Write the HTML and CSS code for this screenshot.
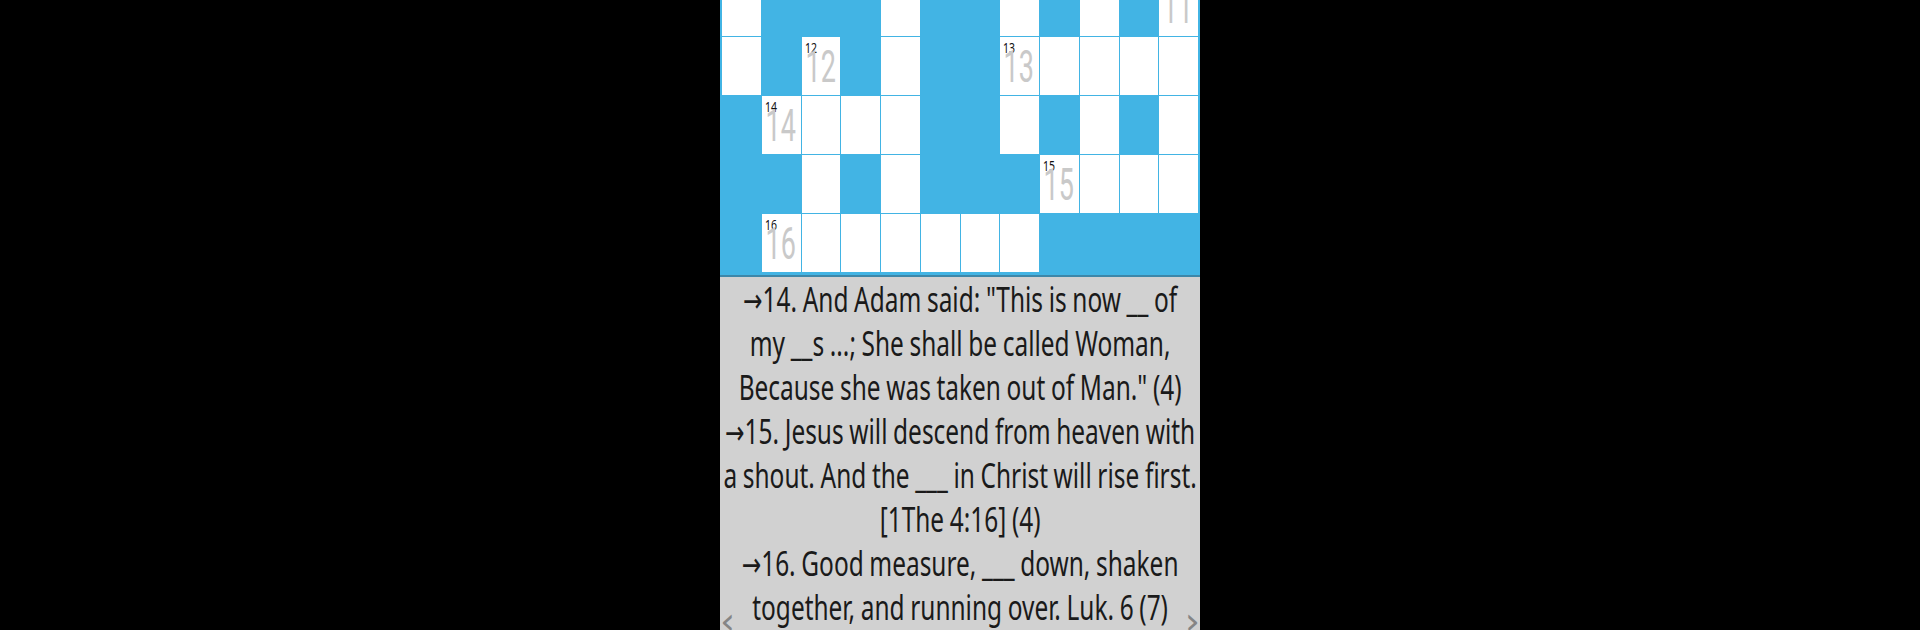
FILE: index.html
```html
<!DOCTYPE html>
<html lang="en">
<head>
    <meta charset="UTF-8">
    <meta name="viewport" content="width=device-width, initial-scale=1.0">
    <title>Bible Crossword</title>
    <link rel="stylesheet" href="styles.css">
</head>
<body>

<div class="phone">
    <!-- Board -->
    <div class="board">
        <div class="grid">
            <!-- row 0 -->
            <div class="cell"></div>
            <div class="cell block"></div>
            <div class="cell block"></div>
            <div class="cell block"></div>
            <div class="cell"></div>
            <div class="cell block"></div>
            <div class="cell block"></div>
            <div class="cell"></div>
            <div class="cell block"></div>
            <div class="cell"></div>
            <div class="cell block"></div>
            <div class="cell"><span class="num">11</span><span class="hint">11</span></div>
            <!-- row 1 -->
            <div class="cell"></div>
            <div class="cell block"></div>
            <div class="cell"><span class="num">12</span><span class="hint">12</span></div>
            <div class="cell block"></div>
            <div class="cell"></div>
            <div class="cell block"></div>
            <div class="cell block"></div>
            <div class="cell"><span class="num">13</span><span class="hint">13</span></div>
            <div class="cell"></div>
            <div class="cell"></div>
            <div class="cell"></div>
            <div class="cell"></div>
            <!-- row 2 -->
            <div class="cell block"></div>
            <div class="cell"><span class="num">14</span><span class="hint">14</span></div>
            <div class="cell"></div>
            <div class="cell"></div>
            <div class="cell"></div>
            <div class="cell block"></div>
            <div class="cell block"></div>
            <div class="cell"></div>
            <div class="cell block"></div>
            <div class="cell"></div>
            <div class="cell block"></div>
            <div class="cell"></div>
            <!-- row 3 -->
            <div class="cell block"></div>
            <div class="cell block"></div>
            <div class="cell"></div>
            <div class="cell block"></div>
            <div class="cell"></div>
            <div class="cell block"></div>
            <div class="cell block"></div>
            <div class="cell block"></div>
            <div class="cell"><span class="num">15</span><span class="hint">15</span></div>
            <div class="cell"></div>
            <div class="cell"></div>
            <div class="cell"></div>
            <!-- row 4 -->
            <div class="cell block"></div>
            <div class="cell"><span class="num">16</span><span class="hint">16</span></div>
            <div class="cell"></div>
            <div class="cell"></div>
            <div class="cell"></div>
            <div class="cell"></div>
            <div class="cell"></div>
            <div class="cell"></div>
            <div class="cell block"></div>
            <div class="cell block"></div>
            <div class="cell block"></div>
            <div class="cell block"></div>
        </div>
    </div>

    <!-- Clues -->
    <div class="clues">
        <div class="clue-text">
            <span class="arrow">→</span>14. And Adam said: "This is now __ of<br>
            my __s ...; She shall be called Woman,<br>
            Because she was taken out of Man." (4)<br>
            <span class="arrow">→</span>15. Jesus will descend from heaven with<br>
            a shout. And the ___ in Christ will rise first.<br>
            [1The 4:16] (4)<br>
            <span class="arrow">→</span>16. Good measure, ___ down, shaken<br>
            together, and running over. Luk. 6 (7)
        </div>
        <span class="nav prev">‹</span>
        <span class="nav next">›</span>
    </div>
</div>

</body>
</html>
```

FILE: styles.css
```css
body {
    margin: 0;
    background-color: #000;
}
.phone {
    width: 480px;
    height: 630px;
    margin: 0 auto;
    overflow: hidden;
    display: flex;
    flex-direction: column;
}
.board {
    height: 275px;
    background-color: #42b4e4;
    border-bottom: 2px solid #3d87a9;
    overflow: hidden;
    flex-shrink: 0;
}
.grid {
    display: grid;
    grid-template-columns: repeat(12, 1fr);
    grid-template-rows: repeat(5, 58px);
    gap: 1px;
    margin-top: -22px;
    padding: 0 2px;
}
.cell {
    background-color: #fff;
    position: relative;
    overflow: hidden;
}
.cell.block {
    background-color: transparent;
}
.num {
    position: absolute;
    left: 3px;
    top: 3px;
    font-family: "Noto Sans", sans-serif;
    font-size: 15px;
    line-height: 1;
    color: #111;
    transform: scaleX(0.7);
    transform-origin: left top;
}
.hint {
    display: block;
    padding: 7px 0 0 6px;
    font-family: Roboto, sans-serif;
    font-size: 45px;
    line-height: 1;
    color: #c9c9c9;
    transform: scaleX(0.6);
    transform-origin: left top;
}
.clues {
    flex: 1;
    position: relative;
    background-color: #d1d1d1;
    padding-top: 0;
    overflow: hidden;
}
.clue-text {
    width: 688px;
    transform: scaleX(0.698);
    transform-origin: left top;
    text-align: center;
    white-space: nowrap;
    font-family: "Noto Sans", sans-serif;
    font-size: 35px;
    line-height: 44px;
    word-spacing: -1px;
    color: #1a1a1a;
}
.arrow {
    font-family: "DejaVu Sans", sans-serif;
    font-size: 0.95em;
    line-height: 0;
}
.nav {
    position: absolute;
    bottom: -10px;
    font-family: "DejaVu Sans", sans-serif;
    font-size: 38px;
    line-height: 1;
    color: #858585;
}
.prev {
    left: 0;
}
.next {
    right: 0;
}
```
